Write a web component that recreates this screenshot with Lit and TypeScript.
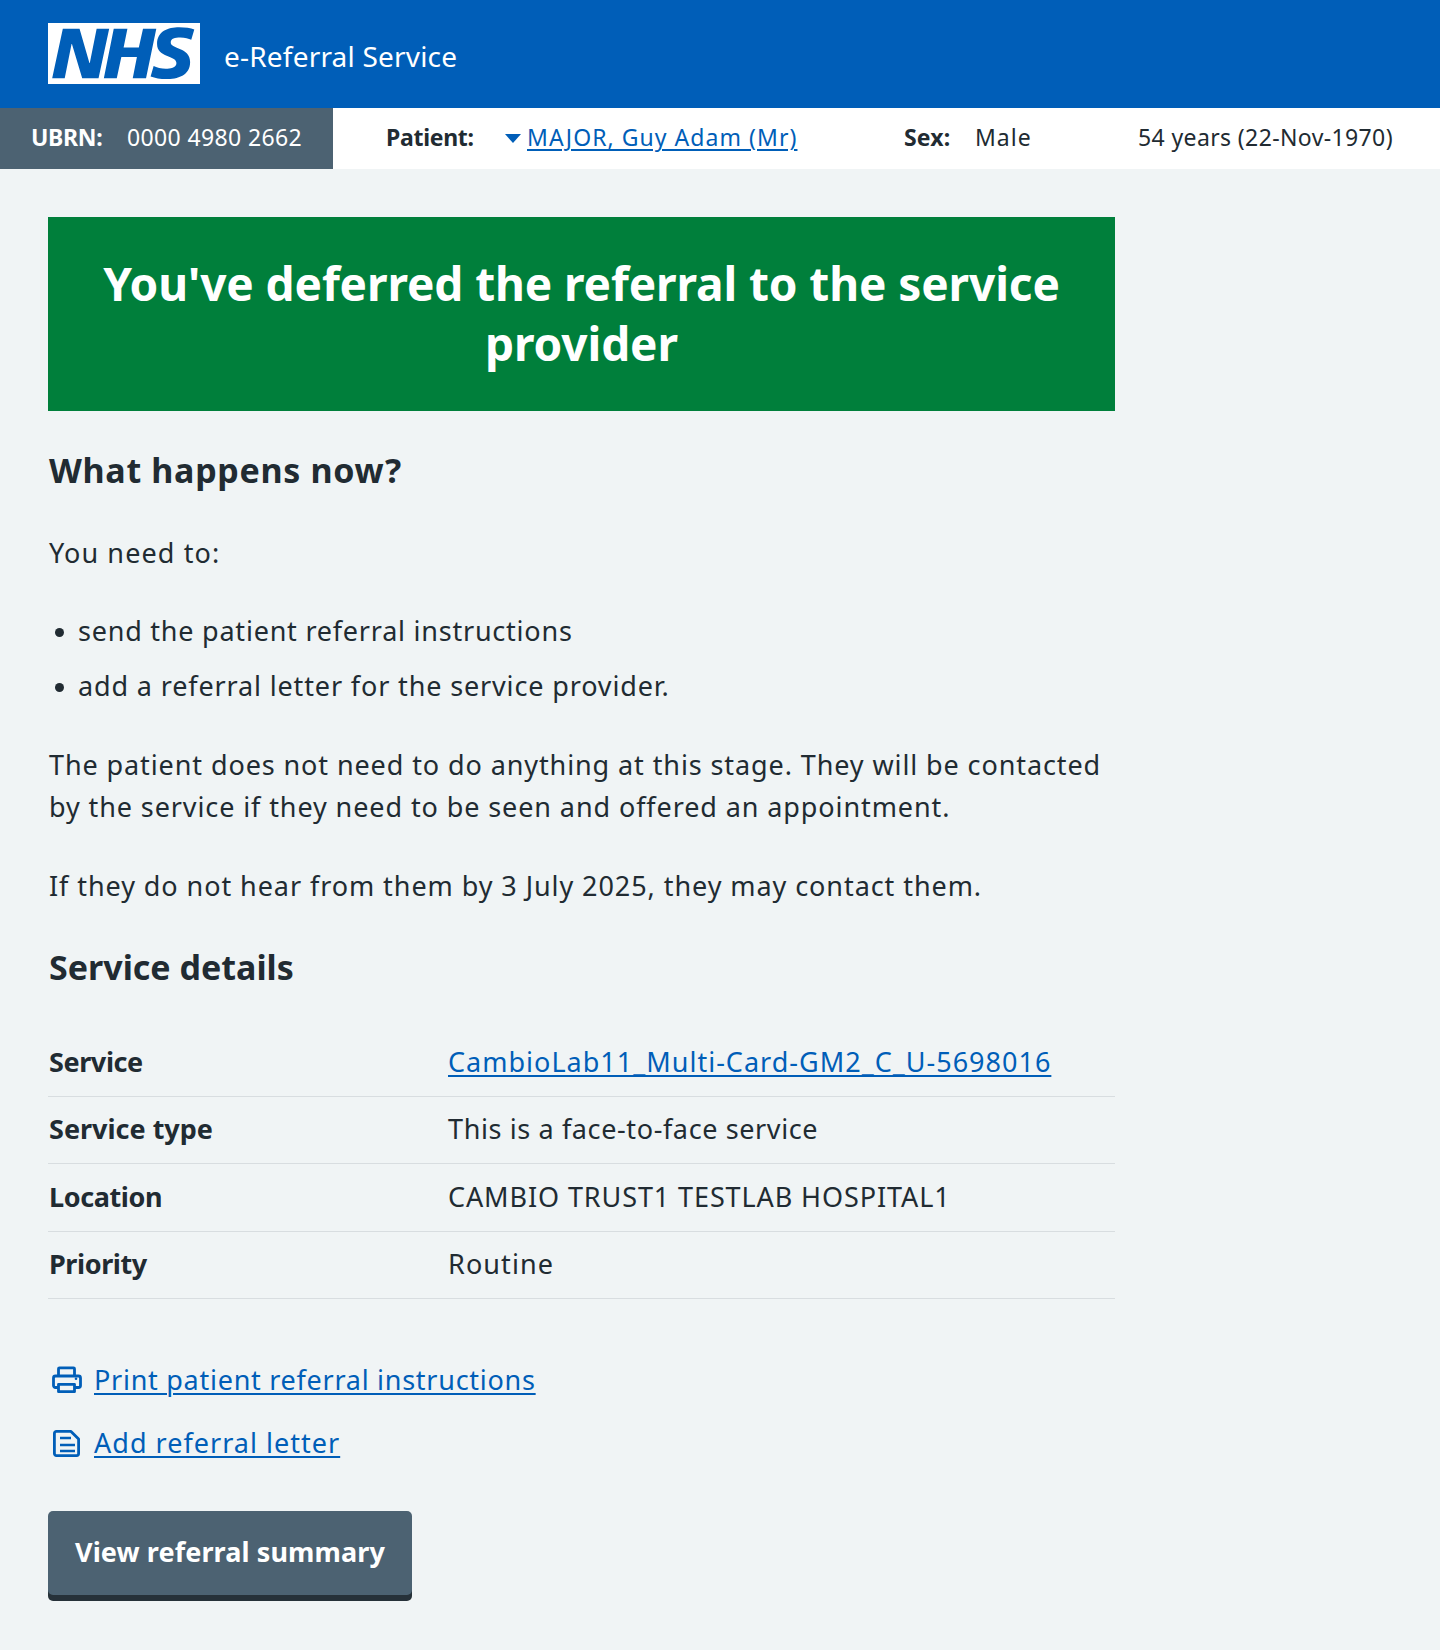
import { LitElement, html, css } from "lit";
import { customElement } from "lit/decorators.js";

@customElement("app-root")
export class AppRoot extends LitElement {
  static styles = css`
    :host { display: block; min-height: 1650px; background: #f0f4f5; color: #212b32; font-family: "Noto Sans", "Open Sans", sans-serif; font-size: 27px; line-height: 42px; letter-spacing: 0.9px; }
    a { color: #005eb8; text-decoration: underline; text-underline-offset: 3px; text-decoration-thickness: 2px; }
    .hdr { background: #005eb8; height: 108px; display: flex; align-items: center; padding: 0 48px; gap: 24px; box-sizing: border-box; }
    .logo { width: 152px; height: 61px; display: block; margin-top: -2px; }
    .svc { color: #fff; font-size: 28px; line-height: 1; margin-top: 3px; letter-spacing: 0.2px; }
    .bar { background: #fff; height: 61px; display: flex; align-items: center; font-size: 23px; line-height: 30px; letter-spacing: 0.38px; }
    .bar b { letter-spacing: -0.3px; }
    .bar span, .bar b, .bar a { margin-bottom: 3px; }
    .ubrn { background: #4c6272; color: #fff; width: 333px; height: 100%; box-sizing: border-box; padding-left: 31px; display: flex; align-items: center; }
    .ubrn b { width: 96px; }
    .pat { display: flex; align-items: center; margin-left: 53px; width: 518px; }
    .pat b { width: 119px; }
    .pat a { letter-spacing: 1.05px; }
    .bar .tri { width: 0; height: 0; border-left: 8px solid transparent; border-right: 8px solid transparent; border-top: 9px solid #005eb8; margin: 0 6px 0 0; }
    .sex { width: 234px; display: flex; }
    .sex b { width: 71px; letter-spacing: 0.2px; }
    .sex span { letter-spacing: 1px; }
    main { padding: 48px 48px 0; width: 1067px; }
    .banner { background: #007f3b; color: #fff; height: 194px; display: flex; align-items: center; justify-content: center; text-align: center; padding: 0 40px 2px; box-sizing: border-box; }
    h1 { font-size: 46px; line-height: 60px; font-weight: 700; margin: 0; letter-spacing: -0.1px; }
    h2 { font-size: 34px; line-height: 44px; font-weight: 700; margin: 0; letter-spacing: 0; padding-left: 1px; }
    h2.a { margin-top: 37px; letter-spacing: 0.68px; }
    h2.b { margin-top: 38px; }
    p { margin: 0; padding-left: 1px; }
    .need { margin-top: 40px; letter-spacing: 1.1px; }
    ul { margin: 36px 0 0; padding: 0; list-style: none; letter-spacing: 0.77px; }
    li { margin-bottom: 13px; display: flex; align-items: center; }
    li::before { content: ""; width: 9px; height: 9px; border-radius: 50%; background: #212b32; margin: 2px 14px 0 7px; flex: none; }
    .wideli { letter-spacing: 0.86px; }
    .p2 { margin-top: 37px; }
    .p3 { margin-top: 37px; letter-spacing: 0.93px; }
    .rows { margin-top: 40px; }
    .row { display: grid; grid-template-columns: 400px 1fr; height: 67.5px; align-items: center; border-bottom: 1px solid #d8dde0; box-sizing: border-box; padding-bottom: 1px; }
    .row b { font-weight: 700; letter-spacing: 0; padding-left: 1px; }
    .row b.tight { letter-spacing: -0.4px; }
    .row a { letter-spacing: 1.01px; }
    .narrow { letter-spacing: 0.62px; }
    .wide { letter-spacing: 1.1px; }
    .links { margin-top: 60px; display: flex; flex-direction: column; gap: 21px; }
    .lnk { display: flex; align-items: center; height: 42px; gap: 10px; }
    .lnk svg { width: 36px; height: 36px; display: block; flex: none; }
    .print { letter-spacing: 0.73px; }
    .letter { letter-spacing: 1.02px; }
    .btn { margin-top: 47px; display: inline-block; background: #4c6272; color: #fff; font-weight: 700; font-size: 27px; height: 84px; line-height: 82px; padding: 0 27px; border-radius: 5px; box-shadow: 0 6px 0 #263139; letter-spacing: 0.1px; text-decoration: none; }
  `;

  render() {
    return html`
      <div class="hdr">
        <svg class="logo" viewBox="0 0 40 16" preserveAspectRatio="none">
          <path fill="#fff" d="M0 0h40v16H0z"></path>
          <path fill="#005eb8" d="M3.9 1.5h4.4l2.6 9h.1l1.8-9h3.3l-2.8 13H9l-2.7-9h-.1l-1.8 9H1.1M17.3 1.5h3.6l-1 4.9h4L25 1.5h3.5l-2.7 13h-3.5l1.1-5.6h-4.1l-1.2 5.6h-3.4M37.7 4.4c-.7-.3-1.6-.6-2.9-.6-1.4 0-2.5.2-2.5 1.3 0 1.8 5.1 1.2 5.1 5.1 0 3.6-3.3 4.5-6.4 4.5-1.3 0-2.9-.3-4-.7l.8-2.7c.7.4 2.1.7 3.2.7s2.8-.2 2.8-1.5c0-2.1-5.1-1.3-5.1-5 0-3.4 2.9-4.4 5.8-4.4 1.6 0 3.1.2 4 .6"></path>
        </svg>
        <span class="svc">e-Referral Service</span>
      </div>
      <div class="bar">
        <div class="ubrn"><b>UBRN:</b><span>0000 4980 2662</span></div>
        <div class="pat"><b>Patient:</b><span class="tri"></span><a href="#">MAJOR, Guy Adam (Mr)</a></div>
        <div class="sex"><b>Sex:</b><span>Male</span></div>
        <span>54 years (22-Nov-1970)</span>
      </div>
      <main>
        <div class="banner"><h1>You've deferred the referral to the service provider</h1></div>
        <h2 class="a">What happens now?</h2>
        <p class="need">You need to:</p>
        <ul>
          <li>send the patient referral instructions</li>
          <li><span class="wideli">add a referral letter for the service provider.</span></li>
        </ul>
        <p class="p2">The patient does not need to do anything at this stage. They will be contacted by the service if they need to be seen and offered an appointment.</p>
        <p class="p3">If they do not hear from them by 3 July 2025, they may contact them.</p>
        <h2 class="b">Service details</h2>
        <div class="rows">
          <div class="row"><b class="tight">Service</b><span><a href="#">CambioLab11_Multi-Card-GM2_C_U-5698016</a></span></div>
          <div class="row"><b>Service type</b><span class="narrow">This is a face-to-face service</span></div>
          <div class="row"><b class="tight">Location</b><span>CAMBIO TRUST1 TESTLAB HOSPITAL1</span></div>
          <div class="row"><b class="tight">Priority</b><span class="wide">Routine</span></div>
        </div>
        <div class="links">
          <div class="lnk">
            <svg viewBox="0 0 36 36" fill="none" stroke="#005eb8" stroke-width="2.800" stroke-linejoin="round">
              <path d="M10.500 14V6.800a1 1 0 0 1 1-1h14a1 1 0 0 1 1 1V14"></path>
              <path d="M10.500 25.500H7.500a2 2 0 0 1-2-2V16a2 2 0 0 1 2-2h23a2 2 0 0 1 2 2v7.500a2 2 0 0 1-2 2h-4"></path>
              <path d="M10.500 22.300h16v7.400h-16z"></path>
              <circle cx="28" cy="16.800" r="1.300" fill="#005eb8" stroke="none"></circle>
            </svg>
            <a class="print" href="#">Print patient referral instructions</a>
          </div>
          <div class="lnk">
            <svg viewBox="0 0 36 36" fill="none" stroke="#005eb8" stroke-width="2.800" stroke-linejoin="round">
              <path d="M6.400 8.400a2 2 0 0 1 2-2H23l7.600 7.600v14.600a2 2 0 0 1-2 2H8.400a2 2 0 0 1-2-2z"></path>
              <path d="M12 13h11M12 20h15M12 26h15" stroke-width="2.600"></path>
            </svg>
            <a class="letter" href="#">Add referral letter</a>
          </div>
        </div>
        <a class="btn">View referral summary</a>
      </main>
    `;
  }
}
